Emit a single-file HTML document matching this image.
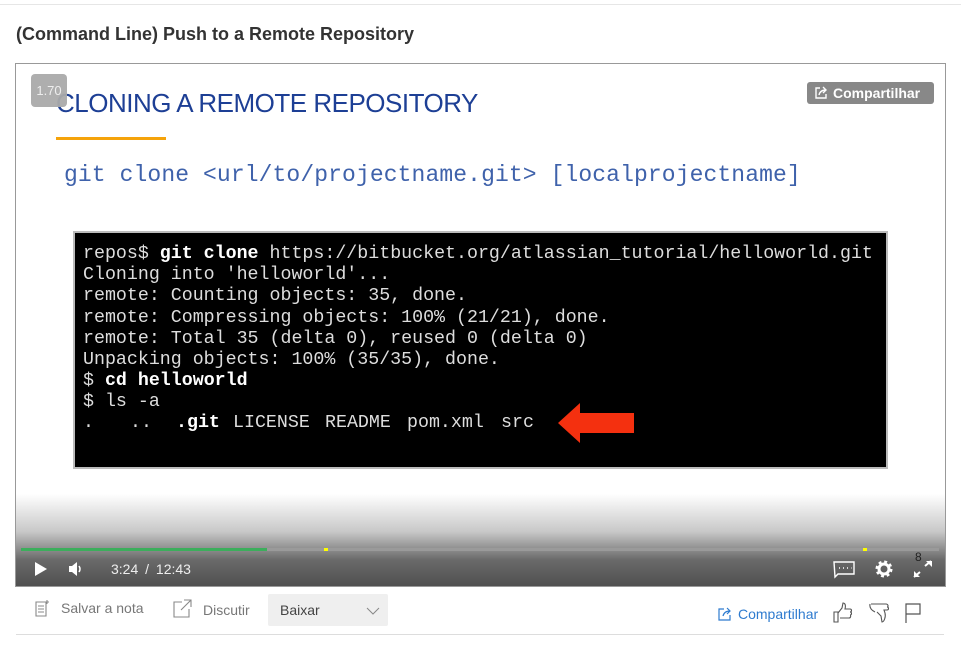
<!DOCTYPE html>
<html><head><meta charset="utf-8"><style>
*{margin:0;padding:0;box-sizing:border-box}
body{width:961px;height:654px;background:#fff;font-family:"Liberation Sans",sans-serif;position:relative;overflow:hidden}
.a{position:absolute}
.mono{font-family:"Liberation Mono",monospace;white-space:pre}
</style></head><body>
<div class="a" style="left:0;top:4px;width:961px;height:1px;background:#e6e6e6"></div>
<div class="a" style="left:16px;top:24px;font-size:18px;font-weight:bold;color:#333">(Command Line) Push to a Remote Repository</div>
<div class="a" style="left:15px;top:63px;width:931px;height:524px;border:1px solid #999;overflow:hidden;background:#fff">
  <div class="a" style="left:40px;top:24px;font-size:26px;color:#1d3f95;letter-spacing:-0.5px;white-space:nowrap">CLONING A REMOTE REPOSITORY</div>
  <div class="a" style="left:15px;top:10px;width:36px;height:33px;background:#aaa;border-radius:4px;color:#eee;font-size:13px;line-height:33px;text-align:center;opacity:.95">1.70</div>
  <div class="a" style="left:40px;top:73px;width:110px;height:3px;background:#f5a30a"></div>
  <div class="a mono" style="left:48px;top:98px;font-size:23px;color:#3f62ab;letter-spacing:0.1px">git clone &lt;url/to/projectname.git&gt; [localprojectname]</div>
  <div class="a" style="left:791px;top:18px;width:127px;height:22px;background:#888;border-radius:3px;color:#fff;font-size:14px;font-weight:bold;line-height:22px;padding-left:26px">Compartilhar
    <svg class="a" style="left:7px;top:4px" width="14" height="14" viewBox="0 0 14 14" fill="none" stroke="#fff" stroke-width="1.4"><path d="M6 2H2v10h10V8"/><path d="M5 9c1-4 4-5 7-5M9 1l3 3-3 3"/></svg></div>
  <div class="a" style="left:57px;top:167px;width:815px;height:238px;background:#000;border:2px solid #bbb"></div>
  <div class="a mono" style="left:67px;top:180px;font-size:18.3px;line-height:21.2px;color:#ddd">repos$ <b style="color:#fff">git clone</b> https://bitbucket.org/atlassian_tutorial/helloworld.git
Cloning into 'helloworld'...
remote: Counting objects: 35, done.
remote: Compressing objects: 100% (21/21), done.
remote: Total 35 (delta 0), reused 0 (delta 0)
Unpacking objects: 100% (35/35), done.
$ <b style="color:#fff">cd helloworld</b>
$ ls -a</div>
  <div class="a mono" style="top:349px;left:67px;font-size:18.3px;color:#ddd">.</div>
  <div class="a mono" style="top:349px;left:114px;font-size:18.3px;color:#ddd">..</div>
  <div class="a mono" style="top:349px;left:160px;font-size:18.3px;color:#fff;font-weight:bold">.git</div>
  <div class="a mono" style="top:349px;left:217px;font-size:18.3px;color:#ddd">LICENSE</div>
  <div class="a mono" style="top:349px;left:309px;font-size:18.3px;color:#ddd">README</div>
  <div class="a mono" style="top:349px;left:391px;font-size:18.3px;color:#ddd">pom.xml</div>
  <div class="a mono" style="top:349px;left:485px;font-size:18.3px;color:#ddd">src</div>
  <svg class="a" style="left:540px;top:337px" width="80" height="44" viewBox="0 0 80 44"><path d="M2 22L24 2v10h54v20H24v10z" fill="#f4300f"/></svg>
  <div class="a" style="left:0;top:430px;width:931px;height:94px;background:linear-gradient(#ffffff00,#c8c8c8 40%,#6a6a6a 70%,#4e4e4e)"></div>
  <div class="a" style="left:5px;top:484px;width:918px;height:3px;background:#9a9a9a"></div>
  <div class="a" style="left:5px;top:484px;width:246px;height:3px;background:#3cae5c"></div>
  <div class="a" style="left:308px;top:484px;width:4px;height:3px;background:#ff0"></div>
  <div class="a" style="left:847px;top:484px;width:4px;height:3px;background:#ff0"></div>
  <svg class="a" style="left:18px;top:497px" width="14" height="16"><path d="M1 1l12 7-12 7z" fill="#fff"/></svg>
  <svg class="a" style="left:52px;top:497px" width="16" height="16"><path d="M1 5h3l5-4v14l-5-4H1z" fill="#fff"/><path d="M11 5q2 3 0 6" stroke="#fff" stroke-width="1.5" fill="none"/></svg>
  <div class="a" style="left:95px;top:497px;font-size:14px;color:#eee;word-spacing:3px">3:24 / 12:43</div>
  <svg class="a" style="left:817px;top:497px" width="22" height="18" fill="none" stroke="#fff" stroke-width="1.4"><path d="M1 1h20v12H5l-3 3z"/><path d="M6 7h1M10 7h1M14 7h1M18 7h0.5"/></svg>
  <svg class="a" style="left:858px;top:495px" width="20" height="20" viewBox="0 0 20 20"><circle cx="10" cy="10" r="6.5" fill="none" stroke="#fff" stroke-width="4" stroke-dasharray="2.6 2.5"/><circle cx="10" cy="10" r="5" fill="none" stroke="#fff" stroke-width="3"/></svg>
  <div class="a" style="left:899px;top:486px;font-size:12px;color:#222">8</div>
  <svg class="a" style="left:897px;top:496px" width="20" height="18" fill="#fff" stroke="#fff" stroke-width="2"><path d="M12 6l6-5M1 17l6-5" /><path d="M13 1h6v6zM1 11v6h6z" stroke-width="0"/></svg>
</div>
<svg class="a" style="left:35px;top:599px" width="16" height="18" fill="none" stroke="#888" stroke-width="1.1"><path d="M1 3h10v14H1zM3 7h6M3 10h6M3 13h6M12 1v4M10 3h4"/></svg>
<div class="a" style="left:61px;top:600px;font-size:14px;color:#777">Salvar a nota</div>
<svg class="a" style="left:173px;top:599px" width="19" height="19" fill="none" stroke="#888" stroke-width="1.1"><path d="M9 3H1v15h15V10M8 11l10-10M11 1h7v7"/></svg>
<div class="a" style="left:203px;top:602px;font-size:14px;color:#777">Discutir</div>
<div class="a" style="left:268px;top:594px;width:120px;height:32px;background:#efefef;border-radius:2px;font-size:14px;color:#444;line-height:32px;padding-left:12px">Baixar
<svg class="a" style="left:98px;top:13px" width="14" height="8" fill="none" stroke="#888"><path d="M1 1l6 6 6-6"/></svg></div>
<svg class="a" style="left:718px;top:607px" width="14" height="14" fill="none" stroke="#2e7bcf" stroke-width="1.2"><path d="M6 2H1v11h11V8"/><path d="M5 9c1-4 4-5 7-5M9 1l3 3-3 3"/></svg>
<div class="a" style="left:738px;top:606px;font-size:14px;color:#2e7bcf">Compartilhar</div>
<svg class="a" style="left:832px;top:602px" width="21" height="22" fill="none" stroke="#555" stroke-width="1.1"><path d="M2 10h4v10H2zM6 11l4-5 1-5c2 0 3 2 2 6h5c2 0 2 3 0 3 2 0 2 3 0 3 1 0 1 3-1 3H8"/></svg>
<svg class="a" style="left:869px;top:602px" width="21" height="22" fill="none" stroke="#555" stroke-width="1.1"><path d="M2 2h15c2 0 3 3 1 3 2 0 2 3 0 3h-3l1 3c1 4-1 9-3 9l-1-6-4-4"/><path d="M1 2q-1 5 5 8"/></svg>
<svg class="a" style="left:905px;top:603px" width="16" height="20" fill="none" stroke="#555" stroke-width="1.2"><path d="M1 20V1h14v10H1"/></svg>
<div class="a" style="left:16px;top:634px;width:928px;height:1px;background:#ddd"></div>
</body></html>
